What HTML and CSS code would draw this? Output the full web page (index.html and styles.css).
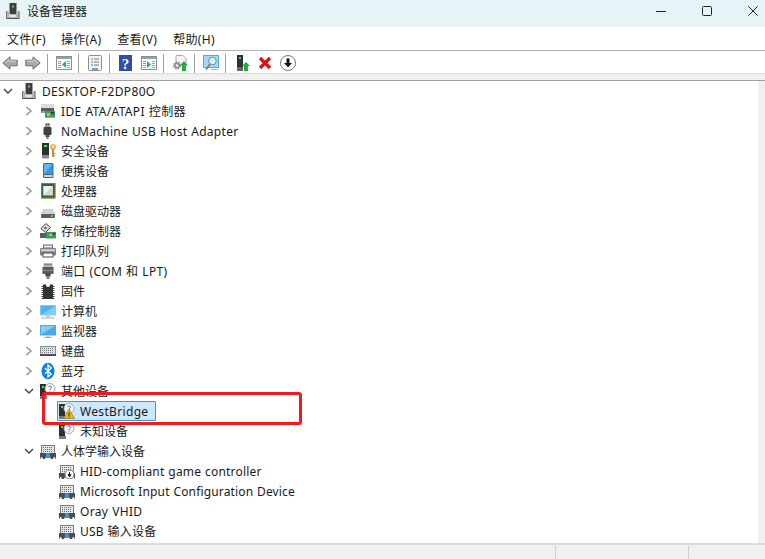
FILE: index.html
```html
<!DOCTYPE html>
<html lang="zh-CN">
<head>
<meta charset="utf-8">
<title>设备管理器</title>
<link rel="stylesheet" href="styles.css">
</head>
<body>
<svg class="defs" width="0" height="0" aria-hidden="true">
  <defs>
    <symbol id="i-tower" viewBox="0 0 16 16"><rect x="4.500" y="0" width="7" height="9" fill="#3f3f3f"/><rect x="7" y="2.500" width="2" height="2" fill="#45e04a"/><rect x="1" y="8" width="13.500" height="8" fill="#b4b4b4"/><rect x="5" y="8" width="6" height="3" fill="#3f3f3f"/><rect x="4" y="12" width="7" height="2" fill="#e2e2e2"/><rect x="1" y="15" width="13.500" height="1" fill="#555"/><rect x="1" y="8" width="1" height="8" fill="#777"/><rect x="13.500" y="8" width="1" height="8" fill="#777"/></symbol>
    <symbol id="i-ide" viewBox="0 0 16 16"><rect x="1" y="1" width="13" height="5" fill="#dcdcdc"/><rect x="1" y="5" width="13" height="3" fill="#5a5a5a"/><rect x="1" y="8" width="5" height="2" fill="#9a9a9a"/><rect x="5" y="8" width="10" height="7" fill="#3f9a62"/><rect x="7" y="10" width="3" height="3" fill="#d7b64a"/><rect x="11" y="9" width="3" height="2" fill="#20552f"/><rect x="5" y="14" width="10" height="1" fill="#c9a83a"/></symbol>
    <symbol id="i-usb" viewBox="0 0 16 16"><rect x="5" y="0" width="5" height="4" fill="#a0a0a0"/><rect x="6" y="1" width="1" height="1" fill="#444"/><rect x="8" y="1" width="1" height="1" fill="#444"/><rect x="3.500" y="4" width="8" height="8" rx="1" fill="#404040"/><rect x="5.500" y="12" width="4" height="2" fill="#555"/><rect x="6.500" y="14" width="2" height="2" fill="#777"/></symbol>
    <symbol id="i-key" viewBox="0 0 16 16"><rect x="2" y="0" width="7" height="12" fill="#2f2f2f"/><rect x="4" y="2" width="3" height="2" fill="#45e04a"/><rect x="2" y="12" width="7" height="3.500" fill="#8a8a8a"/><circle cx="13" cy="4" r="3" fill="#e8b84a"/><circle cx="13" cy="3.500" r="1" fill="#fff"/><rect x="12" y="6" width="2" height="8" fill="#c8942a"/><rect x="14" y="10" width="1.500" height="1" fill="#c8942a"/><rect x="14" y="12" width="1.500" height="1" fill="#c8942a"/></symbol>
    <symbol id="i-portable" viewBox="0 0 16 16"><rect x="3" y="0" width="10.500" height="15" rx="1" fill="#59636d"/><rect x="4" y="1" width="8.500" height="10" fill="#2f9bee"/><path d="M4 11V1h8.500z" fill="#63b6f4"/><rect x="4" y="12" width="8.500" height="2" fill="#cfd2d6"/></symbol>
    <symbol id="i-cpu" viewBox="0 0 16 16"><rect x="1" y="0" width="14.500" height="15.500" fill="#33603f"/><rect x="1.500" y="0.500" width="13.500" height="14.500" fill="none" stroke="#c2a64a" stroke-dasharray="1 1"/><rect x="3.500" y="3" width="9.500" height="9.500" fill="#d3d6d2"/><path d="M3.500 12.500V3H13z" fill="#eef0ee"/></symbol>
    <symbol id="i-disk" viewBox="0 0 16 16"><path d="M3 6h10l2 5H1z" fill="#d2d2d2"/><rect x="1" y="11" width="14" height="4" rx="1" fill="#5c5c5c"/><rect x="11" y="12" width="2" height="2" fill="#45e04a"/></symbol>
    <symbol id="i-storage" viewBox="0 0 16 16"><path d="M1 5.500l5-5 4.500 4-5 5z" fill="#dcdcdc" stroke="#444"/><circle cx="5.500" cy="5" r="1.300" fill="#666"/><path d="M0 10h8v5H0z" fill="#5e5e5e"/><rect x="6" y="9" width="10" height="6.500" fill="#3f9a62"/><rect x="9" y="11" width="3" height="2" fill="#d7b64a"/><rect x="13" y="10" width="2" height="2" fill="#20552f"/></symbol>
    <symbol id="i-printer" viewBox="0 0 16 16"><rect x="3.500" y="2" width="9" height="3" fill="#f2f2f2" stroke="#666"/><rect x="0" y="5" width="16" height="7.500" rx="1" fill="#7b8086"/><rect x="1" y="6" width="14" height="2.500" fill="#c4c8cc"/><rect x="3" y="10" width="10" height="4" fill="#fff" stroke="#444"/></symbol>
    <symbol id="i-port" viewBox="0 0 16 16"><rect x="3.500" y="0" width="9" height="4" fill="#b8b8b8"/><path d="M4.500 1.500h7" stroke="#555" stroke-dasharray="1 1"/><rect x="2.500" y="4" width="11" height="7" fill="#5a5a5a"/><rect x="2.500" y="7" width="11" height="1" fill="#8c8c8c"/><rect x="5.500" y="11" width="5" height="2.500" fill="#444"/><rect x="6.500" y="13.500" width="3" height="2.500" fill="#7a7a7a"/></symbol>
    <symbol id="i-chip" viewBox="0 0 16 16"><path d="M1.500 3.500h13M1.500 5.500h13M1.500 7.500h13M1.500 9.500h13M1.500 11.500h13M1.500 13.500h13M1.500 15.500h13" stroke="#444"/><rect x="3" y="1.500" width="10" height="14.500" fill="#333"/><circle cx="8" cy="2" r="2" fill="#fff"/></symbol>
    <symbol id="i-computer" viewBox="0 0 16 16"><rect x="0" y="2" width="16" height="10.500" fill="#7fcdf2"/><path d="M1 12V3h14z" fill="#4fb4ec"/><rect x="6" y="12.500" width="4" height="2" fill="#c2ced4"/><rect x="1" y="14.500" width="14" height="1" fill="#a4b2ba"/></symbol>
    <symbol id="i-monitor" viewBox="0 0 16 16"><rect x="0" y="2" width="16" height="10.500" fill="#46ace8"/><path d="M1 11.500V3h14z" fill="#87cdf2"/><rect x="6" y="12.500" width="4" height="1.500" fill="#c2ced4"/><rect x="4" y="14" width="8" height="1" fill="#a4b2ba"/></symbol>
    <symbol id="i-keyboard" viewBox="0 0 16 16"><rect x=".5" y="3.500" width="15" height="8" fill="#dfe2e5" stroke="#8b9096"/><path d="M2 5.500h12M2 7.500h12M2 9.500h12" stroke="#777c82" stroke-dasharray="1 1"/><rect x="0" y="11" width="16" height="2" fill="#4c5054"/></symbol>
    <symbol id="i-bt" viewBox="0 0 16 16"><ellipse cx="8" cy="8" rx="6.500" ry="8.300" fill="#0c7fe8"/><path d="M4.800 5l6.400 6L8 14V2l3.200 3-6.400 6" fill="none" stroke="#fff" stroke-width="1.300"/></symbol>
    <symbol id="i-other" viewBox="0 0 16 16"><rect x="0" y="1" width="6" height="12" fill="#2f2f2f"/><rect x="2" y="3" width="2" height="2" fill="#45e04a"/><rect x="0" y="13" width="7" height="3" fill="#7a7a7a"/><circle cx="10" cy="5.500" r="5" fill="#f6f6f6" stroke="#a2a8ae"/><path d="M8.500 4.200c.4-1.500 3-1.500 3 .2 0 1.100-1.500 1.100-1.500 2.300M10 7.500v1" fill="none" stroke="#3470b8"/></symbol>
    <symbol id="i-warn" viewBox="0 0 16 16"><use href="#i-other"/><path d="M10 6l5.500 9.500h-11z" fill="#f1b721" stroke="#8a6a10" stroke-width=".6"/><rect x="9.500" y="9.500" width="1" height="3.500" fill="#222"/><rect x="9.500" y="13.500" width="1" height="1" fill="#222"/></symbol>
    <symbol id="i-hid" viewBox="0 0 16 16"><rect x="1.500" y="2.500" width="13" height="8" fill="#e4e6e8" stroke="#7a7a7a"/><path d="M3 4.500h10M3 6.500h10M3 8.500h10" stroke="#666a6e" stroke-dasharray="1 1"/><path d="M0 10h6v4l-1 2H3l-1-2H1l-.5 2H0zM10 10h6v6h-.5l-.5-2h-1l-1 2h-2l-1-2z" fill="#484d53"/><rect x="6" y="11" width="4" height="4" fill="#3d90dd"/></symbol>
    <symbol id="i-hid-down" viewBox="0 0 16 16"><use href="#i-hid"/><circle cx="10.500" cy="11.500" r="4.500" fill="#fff" stroke="#777"/><path d="M10.500 9v3M9 11.500h3l-1.500 2.500z" stroke="#222" fill="#222"/></symbol>
  </defs>
</svg>

<div class="window">
  <header class="titlebar">
    <svg class="ico title-ico"><use href="#i-tower"/></svg>
    <span class="title">设备管理器</span>
    <div class="controls">
      <svg class="ctl" viewBox="0 0 10 10"><path d="M0 5.500h10" stroke="#222"/></svg>
      <svg class="ctl" viewBox="0 0 10 10"><rect x=".5" y=".5" width="9" height="9" rx="1" fill="none" stroke="#222"/></svg>
      <svg class="ctl" viewBox="0 0 10 10"><path d="M.3.3l9.400 9.400M9.700.3L.3 9.700" stroke="#222"/></svg>
    </div>
  </header>

  <nav class="menubar">
    <span class="menu">文件(F)</span>
    <span class="menu">操作(A)</span>
    <span class="menu">查看(V)</span>
    <span class="menu">帮助(H)</span>
  </nav>

  <div class="toolbar">
    <svg class="ico btn" viewBox="0 0 16 16"><path d="M.8 8L8 1.800v3.400h7.200v5.600H8v3.400z" fill="#a8a8a8" stroke="#6f6f6f"/><path d="M3 8l4-3.400v1.600h7" fill="none" stroke="#d8d8d8"/></svg>
    <svg class="ico btn" viewBox="0 0 16 16"><path d="M15.200 8L8 1.800v3.400H.8v5.600H8v3.400z" fill="#a8a8a8" stroke="#6f6f6f"/><path d="M2 6.200h7V4.600L13 8" fill="none" stroke="#d8d8d8"/></svg>
    <span class="sep"></span>
    <svg class="ico btn" viewBox="0 0 16 16"><rect x=".5" y="1.500" width="15" height="13" fill="#fff" stroke="#8a8f94"/><rect x="1" y="2" width="14" height="2" fill="#8fa3b5"/><path d="M2 6.500h3M2 8.500h3M2 10.500h3M2 12.500h3M11 6.500h3M11 8.500h3M11 10.500h3M11 12.500h3" stroke="#8fa3b5"/><path d="M10 6v7L6 9.500z" fill="#2bb24c"/></svg>
    <span class="sep"></span>
    <svg class="ico btn" viewBox="0 0 16 16"><rect x="1.500" y=".5" width="13" height="15" rx="1" fill="#f4f4f4" stroke="#8a8f94"/><path d="M4 4h2M7 4h5M4 7h2M7 7h5M4 10h2M7 10h5" stroke="#6d7780"/><rect x="5" y="13" width="6" height="2" fill="#5aa9e6"/></svg>
    <span class="sep"></span>
    <svg class="ico btn" viewBox="0 0 16 16"><rect x="1" y="0" width="13" height="16" fill="#2d4fa8"/><text class="qmark" x="7.500" y="13.500">?</text></svg>
    <svg class="ico btn" viewBox="0 0 16 16"><rect x=".5" y="1.500" width="15" height="13" fill="#fff" stroke="#8a8f94"/><rect x="1" y="2" width="14" height="2" fill="#8fa3b5"/><path d="M2 6.500h3M2 8.500h3M2 10.500h3M2 12.500h3M11 6.500h3M11 8.500h3M11 10.500h3M11 12.500h3" stroke="#8fa3b5"/><path d="M6 6v7l4-3.500z" fill="#2bb24c"/></svg>
    <span class="sep"></span>
    <svg class="ico btn" viewBox="0 0 16 16"><path d="M4 .5h7l3 3v6H4z" fill="#f4f4f4" stroke="#aaa"/><circle cx="5" cy="10.500" r="3" fill="#9a9fa4" stroke="#888" stroke-width="2" stroke-dasharray="1.500 1"/><circle cx="5" cy="10.500" r="1.300" fill="#eee"/><path d="M12 6l4 4.500h-2V16h-4v-5.500H8z" fill="#1fae3c"/></svg>
    <span class="sep"></span>
    <svg class="ico btn" viewBox="0 0 16 16"><rect x=".5" y=".5" width="15" height="12" fill="#a5d9f3" stroke="#5aa9d8"/><circle cx="9.500" cy="6" r="3.800" fill="#d8f0fb" stroke="#6d8ca0"/><path d="M7 9l-4 5.500" stroke="#6d7780" stroke-width="1.600"/><rect x="8" y="14" width="7" height="1" fill="#aab4ba"/></svg>
    <span class="sep"></span>
    <svg class="ico btn" viewBox="0 0 16 16"><rect x="3" y="0" width="6" height="12" fill="#2f2f2f"/><rect x="5" y="2" width="2" height="2" fill="#45e04a"/><rect x="3" y="12" width="6" height="4" fill="#666"/><path d="M12 7l4 4h-2v5h-4v-5H8z" fill="#1fae3c"/></svg>
    <svg class="ico btn" viewBox="0 0 16 16"><path d="M3 3l10 10M13 3L3 13" stroke="#d8101c" stroke-width="3.200"/></svg>
    <svg class="ico btn" viewBox="0 0 16 16"><circle cx="8" cy="8" r="7.500" fill="#fff" stroke="#777"/><path d="M6.500 3.500h3V8h2.500L8 12.500 4 8h2.500z" fill="#111"/></svg>
  </div>

  <div class="band"></div>

  <div class="content">
    <ul class="tree">
      <li class="row lvl0"><svg class="chev"><path d="M2 6l4 4 4-4" class="open"/></svg><svg class="ico"><use href="#i-tower"/></svg><span class="label caps">DESKTOP-F2DP80O</span></li>
      <li class="row lvl1"><svg class="chev"><path d="M5.500 4l4.500 4-4.500 4" class="shut"/></svg><svg class="ico"><use href="#i-ide"/></svg><span class="label caps">IDE ATA/ATAPI 控制器</span></li>
      <li class="row lvl1"><svg class="chev"><path d="M5.500 4l4.500 4-4.500 4" class="shut"/></svg><svg class="ico"><use href="#i-usb"/></svg><span class="label caps tight">NoMachine USB Host Adapter</span></li>
      <li class="row lvl1"><svg class="chev"><path d="M5.500 4l4.500 4-4.500 4" class="shut"/></svg><svg class="ico"><use href="#i-key"/></svg><span class="label">安全设备</span></li>
      <li class="row lvl1"><svg class="chev"><path d="M5.500 4l4.500 4-4.500 4" class="shut"/></svg><svg class="ico"><use href="#i-portable"/></svg><span class="label">便携设备</span></li>
      <li class="row lvl1"><svg class="chev"><path d="M5.500 4l4.500 4-4.500 4" class="shut"/></svg><svg class="ico"><use href="#i-cpu"/></svg><span class="label">处理器</span></li>
      <li class="row lvl1"><svg class="chev"><path d="M5.500 4l4.500 4-4.500 4" class="shut"/></svg><svg class="ico"><use href="#i-disk"/></svg><span class="label">磁盘驱动器</span></li>
      <li class="row lvl1"><svg class="chev"><path d="M5.500 4l4.500 4-4.500 4" class="shut"/></svg><svg class="ico"><use href="#i-storage"/></svg><span class="label">存储控制器</span></li>
      <li class="row lvl1"><svg class="chev"><path d="M5.500 4l4.500 4-4.500 4" class="shut"/></svg><svg class="ico"><use href="#i-printer"/></svg><span class="label">打印队列</span></li>
      <li class="row lvl1"><svg class="chev"><path d="M5.500 4l4.500 4-4.500 4" class="shut"/></svg><svg class="ico"><use href="#i-port"/></svg><span class="label caps">端口 (COM 和 LPT)</span></li>
      <li class="row lvl1"><svg class="chev"><path d="M5.500 4l4.500 4-4.500 4" class="shut"/></svg><svg class="ico"><use href="#i-chip"/></svg><span class="label">固件</span></li>
      <li class="row lvl1"><svg class="chev"><path d="M5.500 4l4.500 4-4.500 4" class="shut"/></svg><svg class="ico"><use href="#i-computer"/></svg><span class="label">计算机</span></li>
      <li class="row lvl1"><svg class="chev"><path d="M5.500 4l4.500 4-4.500 4" class="shut"/></svg><svg class="ico"><use href="#i-monitor"/></svg><span class="label">监视器</span></li>
      <li class="row lvl1"><svg class="chev"><path d="M5.500 4l4.500 4-4.500 4" class="shut"/></svg><svg class="ico"><use href="#i-keyboard"/></svg><span class="label">键盘</span></li>
      <li class="row lvl1"><svg class="chev"><path d="M5.500 4l4.500 4-4.500 4" class="shut"/></svg><svg class="ico"><use href="#i-bt"/></svg><span class="label">蓝牙</span></li>
      <li class="row lvl1"><svg class="chev"><path d="M4 6l4 4 4-4" class="open"/></svg><svg class="ico"><use href="#i-other"/></svg><span class="label">其他设备</span></li>
      <li class="row lvl2"><span class="chev"></span><span class="selected"><svg class="ico"><use href="#i-warn"/></svg><span class="label caps">WestBridge</span></span></li>
      <li class="row lvl2"><span class="chev"></span><svg class="ico"><use href="#i-other"/></svg><span class="label">未知设备</span></li>
      <li class="row lvl1"><svg class="chev"><path d="M4 6l4 4 4-4" class="open"/></svg><svg class="ico"><use href="#i-hid"/></svg><span class="label">人体学输入设备</span></li>
      <li class="row lvl2"><span class="chev"></span><svg class="ico"><use href="#i-hid-down"/></svg><span class="label latin">HID-compliant game controller</span></li>
      <li class="row lvl2"><span class="chev"></span><svg class="ico"><use href="#i-hid"/></svg><span class="label latin narrow">Microsoft Input Configuration Device</span></li>
      <li class="row lvl2"><span class="chev"></span><svg class="ico"><use href="#i-hid"/></svg><span class="label caps">Oray VHID</span></li>
      <li class="row lvl2"><span class="chev"></span><svg class="ico"><use href="#i-hid"/></svg><span class="label latin">USB 输入设备</span></li>
    </ul>
    <div class="scrollbar"></div>
  </div>

  <footer class="statusbar">
    <span class="cell cell-main"></span>
    <span class="cell cell-mid"></span>
    <span class="cell cell-end"></span>
  </footer>

  <div class="callout"></div>
</div>
</body>
</html>
```

FILE: styles.css
```css
* { box-sizing: border-box; }
html, body { margin: 0; padding: 0; background: #fff; }
.defs { position: absolute; }
.window {
  position: relative;
  display: flex;
  flex-direction: column;
  width: 765px;
  height: 559px;
  overflow: hidden;
  font: 12px/20px "Noto Sans", "Noto Sans CJK SC", sans-serif;
  color: #1a1a1a;
}
.ico { display: block; flex: none; width: 16px; height: 16px; }

.titlebar {
  display: flex;
  align-items: flex-start;
  flex: none;
  height: 27px;
  padding: 3px 0 0 5px;
  background: #e6f3f7;
}
.title { margin-left: 6px; font-family: "Noto Sans CJK SC", sans-serif; line-height: 16px; }
.controls { display: flex; gap: 36px; margin: 3px 7px 0 auto; }
.ctl { display: block; width: 10px; height: 10px; }

.menubar {
  display: flex;
  flex: none;
  gap: 16px;
  align-items: center;
  height: 24px;
  padding: 0 0 0 7px;
  border-bottom: 1px solid #b4b4b4;
}
.menu { padding-top: 2px; white-space: nowrap; letter-spacing: .3px; }
.menu:first-child { margin-right: -1px; }

.toolbar {
  display: flex;
  flex: none;
  align-items: center;
  height: 23px;
  padding: 2px 0 0 2px;
  border-bottom: 1px solid #dcdcdc;
}
.btn + .btn { margin-left: 7px; }
.sep { flex: none; width: 1px; height: 19px; margin: 0 8px 0 6px; background: #a0a0a0; }
.qmark { font: bold 15px "Liberation Serif", serif; fill: #fff; text-anchor: middle; }

.band { flex: none; height: 7px; background: #f0f0f0; border-bottom: 1px solid #a0a0a0; }

.content { display: flex; flex: 1; min-height: 0; }
.tree { flex: 1; margin: 0; padding: 0; list-style: none; overflow: hidden; }
.scrollbar { flex: none; width: 7px; background: #f0f0f0; }

.row { display: flex; align-items: center; height: 20px; white-space: nowrap; }
.lvl0 { padding-left: 2px; }
.lvl1 { padding-left: 21px; }
.lvl2 { padding-left: 40px; }
.chev { display: block; flex: none; width: 16px; height: 16px; margin-right: 3px; fill: none; }
.open { stroke: #444; stroke-width: 1.4; fill: none; }
.shut { stroke: #8c8c8c; stroke-width: 1.4; fill: none; }
.label { margin-left: 5px; padding-top: 2px; }
.latin { letter-spacing: .2px; word-spacing: .5px; }
.caps { letter-spacing: .33px; word-spacing: .5px; }
.tight { letter-spacing: .29px; }
.narrow { letter-spacing: .15px; }

.selected {
  display: flex;
  align-items: center;
  height: 20px;
  margin-left: -2px;
  padding: 0 7px 0 1px;
  background: #cce8ff;
  border: 1px solid #3f93d6;
  border-radius: 1px;
}

.statusbar {
  display: flex;
  flex: none;
  height: 16px;
  padding-top: 1px;
  background: #f0f0f0;
  border-top: 2px solid #dcdcdc;
}
.cell { display: block; height: 100%; border-right: 1px solid #d0d0d0; }
.cell-main { width: 556px; }
.cell-mid { width: 133px; }
.cell-end { flex: 1; border-right: 0; }

.callout {
  position: absolute;
  left: 42px;
  top: 392px;
  width: 260px;
  height: 33px;
  border: 3px solid #f01c1c;
  border-radius: 3px;
  pointer-events: none;
}
```
